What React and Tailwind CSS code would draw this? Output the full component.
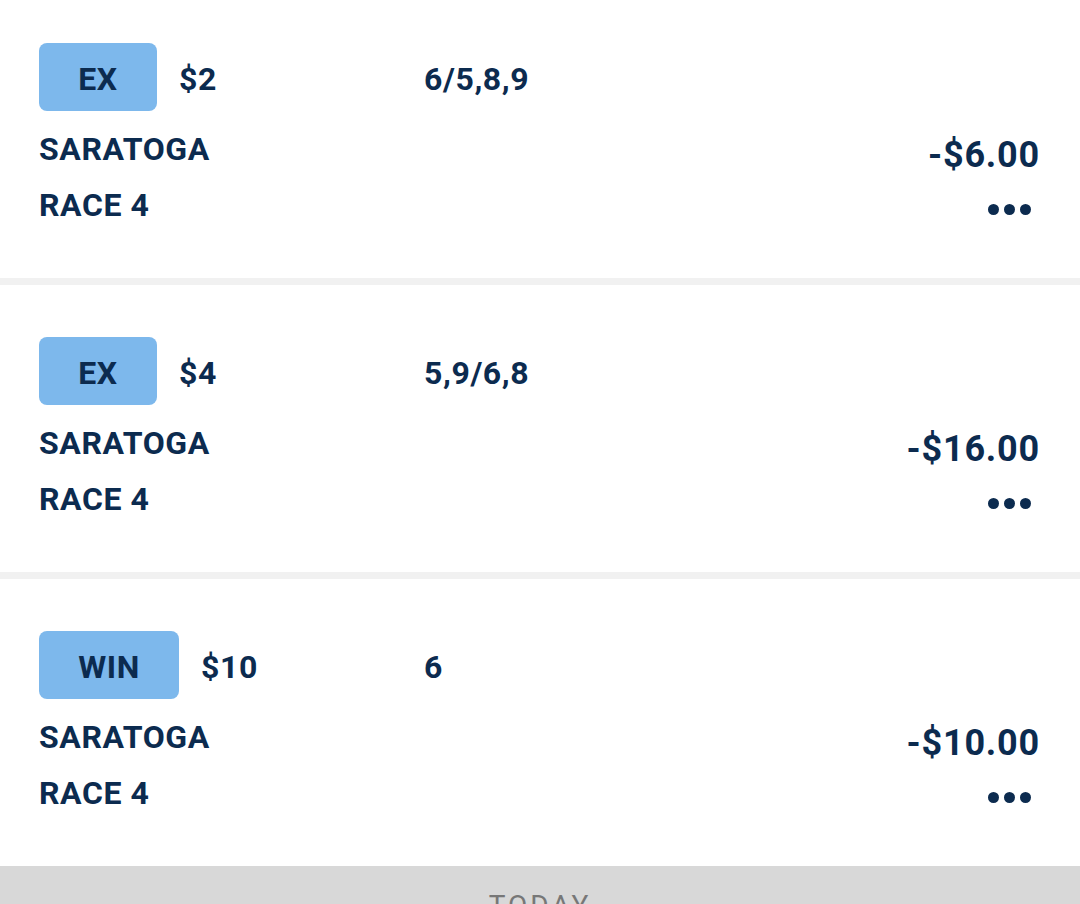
import React from "react";

const bets = [
  { type: "EX", stake: "$2", picks: "6/5,8,9", track: "SARATOGA", race: "RACE 4", total: "-$6.00" },
  { type: "EX", stake: "$4", picks: "5,9/6,8", track: "SARATOGA", race: "RACE 4", total: "-$16.00" },
  { type: "WIN", stake: "$10", picks: "6", track: "SARATOGA", race: "RACE 4", total: "-$10.00" },
];

const BetCard = ({ bet, first }) => {
  return (
    <div
      className={
        first
          ? "bg-white h-[278px] pt-[43px] pl-[39px] pr-[40px]"
          : "bg-white h-[287px] pt-[52px] pl-[39px] pr-[40px]"
      }
    >
      <div className="flex items-center h-[68px] text-[32px] font-bold tracking-[0.6px]">
        <div className="flex items-center w-[385px]">
          <div
            className={
              bet.type === "WIN"
                ? "flex items-center justify-center h-[68px] w-[140px] rounded-[8px] bg-[#7db8ec] pt-[3px]"
                : "flex items-center justify-center h-[68px] w-[118px] rounded-[8px] bg-[#7db8ec] pt-[3px]"
            }
          >
            {bet.type}
          </div>
          <div className="ml-[22px] pt-[3px]">{bet.stake}</div>
        </div>
        <div className="pt-[3px]">{bet.picks}</div>
      </div>

      <div className="flex items-end justify-between mt-[20px] h-[36px]">
        <div className="text-[32px] font-bold leading-[36px] tracking-[0.6px]">{bet.track}</div>
        <div className="text-[36px] font-bold leading-[36px] tracking-[0.8px] translate-y-[6px]">
          {bet.total}
        </div>
      </div>

      <div className="flex items-center justify-between mt-[20px] h-[36px]">
        <div className="text-[32px] font-bold leading-[36px] tracking-[0.6px]">{bet.race}</div>
        <div className="flex items-center gap-[5px] mr-[9px] pt-[8px]">
          <div className="w-[11px] h-[11px] rounded-full bg-[#0c2b4f]" />
          <div className="w-[11px] h-[11px] rounded-full bg-[#0c2b4f]" />
          <div className="w-[11px] h-[11px] rounded-full bg-[#0c2b4f]" />
        </div>
      </div>
    </div>
  );
};

export default function App() {
  return (
    <div
      className="w-[1080px] h-[904px] overflow-hidden bg-[#f1f1f1] text-[#0c2b4f]"
      style={{ fontFamily: "Roboto, 'Liberation Sans', sans-serif" }}
    >
      <div className="flex flex-col gap-[7px]">
        {bets.map((bet, i) => (
          <BetCard key={i} bet={bet} first={i === 0} />
        ))}
      </div>
      <div className="h-[38px] bg-[#d8d8d8] flex justify-center pt-[24px]">
        <span className="text-[28px] leading-[32px] tracking-[3px] text-[#777777]">TODAY</span>
      </div>
    </div>
  );
}
